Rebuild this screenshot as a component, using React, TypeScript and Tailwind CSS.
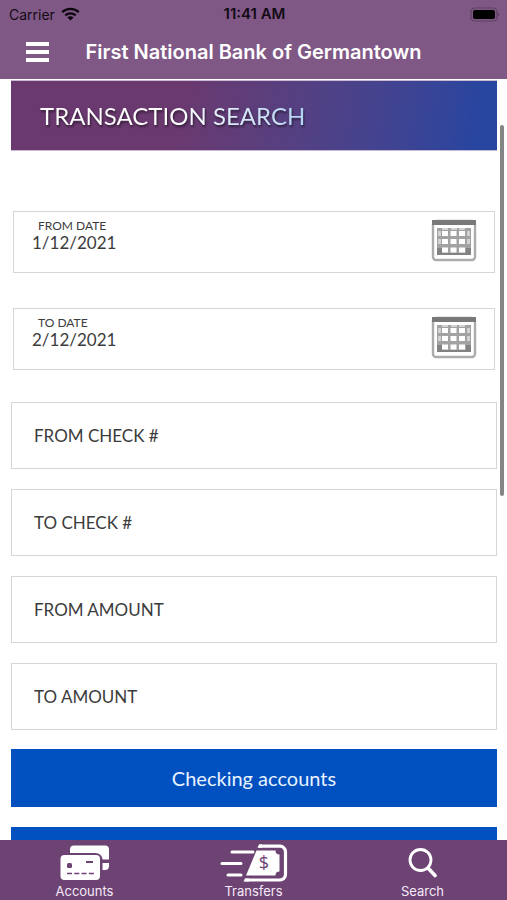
import React from "react";

type DateFieldProps = {
  id: string;
  label: string;
  value: string;
};

const WifiIcon = () => (
  <svg width="19" height="14" viewBox="0 0 19 14" fill="none" aria-hidden="true">
    <path d="M1.2 5.2C5.8.8 13.2.8 17.8 5.2" stroke="#0b070c" strokeWidth="2.4" />
    <path d="M4.300 8.300C7.200 5.600 11.800 5.600 14.700 8.300" stroke="#0b070c" strokeWidth="2.300" />
    <path d="M6.400 10.500C8.200 8.900 10.800 8.900 12.600 10.500L9.500 13.500Z" fill="#0b070c" />
  </svg>
);

const BatteryIcon = () => (
  <svg width="30" height="15" viewBox="0 0 30 15" aria-hidden="true">
    <rect x="1" y="1" width="26" height="13" rx="4" fill="none" stroke="#5d4062" strokeWidth="1.200" />
    <rect x="3" y="3" width="22" height="9" rx="2" fill="#000" />
    <path d="M28 5.500C29.500 6 29.500 9 28 9.500Z" fill="#5d4062" />
  </svg>
);

const CalendarIcon = () => (
  <svg width="46" height="44" viewBox="0 0 46 44" aria-hidden="true">
    <rect x="2" y="2" width="42" height="39" rx="3" fill="#fff" stroke="#ababab" strokeWidth="2.400" />
    <path d="M1 1h44v5H1z" fill="#787878" />
    <rect x="6" y="9" width="34" height="27" fill="#a2a2a2" />
    <path d="M6 29h5v7H6zM35 29h5v7h-5zM11 34h24v2H11z" fill="#828282" />
    <g fill="#d2d2d2">
      <path d="M7 12h3v5H7zM7 20h3v5H7zM36 12h3v5h-3zM36 20h3v5h-3z" />
      <path d="M11 9h6v2h-6zM20 9h6v2h-6zM28 9h6v2h-6z" />
    </g>
    <g fill="#fff">
      <rect x="11" y="12" width="6" height="5" />
      <rect x="19.500" y="12" width="6" height="5" />
      <rect x="28" y="12" width="6" height="5" />
      <rect x="11" y="20" width="6" height="5" />
      <rect x="19.500" y="20" width="6" height="5" />
      <rect x="28" y="20" width="6" height="5" />
      <rect x="11" y="28.500" width="6" height="5" />
      <rect x="19.500" y="28.500" width="6" height="5" />
      <rect x="28" y="28.500" width="6" height="5" />
    </g>
  </svg>
);

const CardsIcon = () => (
  <svg width="50" height="36" viewBox="0 0 50 36" aria-hidden="true">
    <path
      d="M10 8V4.500A4 4 0 0 1 14 .500H45A4 4 0 0 1 49 4.500V14.500H42.500A7 7 0 0 0 35.500 8Z"
      fill="#fff"
    />
    <path d="M42.500 18H49V21A4 4 0 0 1 45 25H42.500Z" fill="#fff" />
    <rect x=".500" y="10" width="39.500" height="25" rx="4" fill="#fff" />
    <rect x="7" y="18" width="5" height="5" rx="1.500" fill="#6c4373" />
    <path d="M26 17h7" stroke="#6c4373" strokeWidth="2" />
    <path d="M7 28.500h27" stroke="#6c4373" strokeWidth="1.500" strokeDasharray="5 2.300" />
  </svg>
);

const TransferIcon = () => (
  <svg width="68" height="38" viewBox="0 0 68 38" aria-hidden="true">
    <g stroke="#fff" strokeWidth="3" strokeLinecap="round">
      <path d="M12 8h21M2 19.500h19M8 31h13" />
    </g>
    <path
      d="M39 2.200H60A5.500 5.500 0 0 1 65.500 7.700V30.500A5.500 5.500 0 0 1 60 36H25"
      fill="none"
      stroke="#fff"
      strokeWidth="3.200"
    />
    <path d="M39 .600 37.400 3.800H42V.600ZM25 34.400 23.400 37.600H29V34.400Z" fill="#fff" />
    <path d="M36.500 6.500H55.500A4 4 0 0 0 59.500 10.500V27.500A4 4 0 0 0 55.500 31.500H26Z" fill="#fff" />
    <text
      x="44"
      y="25"
      textAnchor="middle"
      fontSize="18"
      fill="#6c4373"
      className="font-['Open_Sans',sans-serif]"
    >
      $
    </text>
  </svg>
);

const SearchIcon = () => (
  <svg width="30" height="30" viewBox="0 0 30 30" fill="none" stroke="#fff" aria-hidden="true">
    <circle cx="12.500" cy="12" r="10.500" strokeWidth="2.800" />
    <path d="M20 20 27 27.500" strokeWidth="3.600" strokeLinecap="round" />
  </svg>
);

const DateField = ({ id, label, value }: DateFieldProps) => (
  <div className="flex h-[62px] items-start justify-between border border-[#d6d6d6] pl-[18px] pr-[17px] pt-[7px]">
    <div className="flex min-w-0 flex-1 flex-col">
      <label htmlFor={id} className="pl-[6px] text-[12px] leading-[13px]">
        {label}
      </label>
      <input
        id={id}
        type="text"
        defaultValue={value}
        className="h-[22px] w-full bg-transparent text-[17px] leading-[22px] outline-none"
      />
    </div>
    <button type="button" aria-label={`Choose ${label.toLowerCase()}`}>
      <CalendarIcon />
    </button>
  </div>
);

const tabs = [
  { name: "Accounts", icon: <CardsIcon /> },
  { name: "Transfers", icon: <TransferIcon /> },
  { name: "Search", icon: <SearchIcon /> },
];

const App = () => {
  return (
    <div className="flex h-screen flex-col overflow-hidden bg-white font-['Lato',sans-serif] text-[#3c3c3c]">
      {/* Status bar and title */}
      <header className="shrink-0 bg-[#805886] font-['Inter',sans-serif]">
        <div className="grid h-7 grid-cols-3 items-center pl-[9px] pr-[7px] text-[14px] text-[#120b14]">
          <div className="flex items-center gap-[6px]">
            <span>Carrier</span>
            <WifiIcon />
          </div>
          <span className="text-center text-[15px] font-semibold">11:41 AM</span>
          <div className="flex justify-end">
            <BatteryIcon />
          </div>
        </div>
        <div className="grid h-[51px] grid-cols-[60px_1fr_60px] items-center pb-[3px]">
          <button type="button" aria-label="Menu" className="flex flex-col gap-1 pl-[26px]">
            <span className="h-1 w-[23px] bg-white" />
            <span className="h-1 w-[23px] bg-white" />
            <span className="h-1 w-[23px] bg-white" />
          </button>
          <h1 className="whitespace-nowrap text-center text-[20px] font-semibold text-white">
            First National Bank of Germantown
          </h1>
        </div>
      </header>

      {/* Search form */}
      <main className="relative min-h-0 flex-1 overflow-hidden pl-[11px] pr-[10px]">
        <div className="mt-px flex h-[71px] items-center border-y border-[#c9b8d2] bg-linear-100 from-[#6a396f] from-35% to-[#28459f] to-95% pl-[29px]">
          <h2 className="bg-linear-to-r from-white from-50% to-[#b4d4f4] bg-clip-text text-[24px] text-transparent drop-shadow-[1px_2px_1px_rgba(0,0,0,0.5)]">
            TRANSACTION SEARCH
          </h2>
        </div>

        <form>
          <div className="flex flex-col gap-[35px] px-[2px] pb-8 pt-[60px]">
            <DateField id="from-date" label="FROM DATE" value="1/12/2021" />
            <DateField id="to-date" label="TO DATE" value="2/12/2021" />
          </div>

          <div className="flex flex-col gap-5">
            {["FROM CHECK #", "TO CHECK #", "FROM AMOUNT", "TO AMOUNT"].map((name) => (
              <input
                key={name}
                type="text"
                aria-label={name}
                placeholder={name}
                className="h-[67px] w-full border border-[#d6d6d6] px-[22px] text-[17px] outline-none placeholder:text-[#3c3c3c]"
              />
            ))}
          </div>

          <div className="flex flex-col gap-5 pt-[19px]">
            <button type="button" className="h-[58px] w-full bg-[#0050c0] text-[20px] text-[#e8f3ff]">
              Checking accounts
            </button>
            <button type="button" aria-label="More accounts" className="h-[58px] w-full bg-[#0050c0]" />
          </div>
        </form>

        {/* Scroll thumb */}
        <div className="absolute right-[3px] top-[46px] h-[371px] w-1 rounded-full bg-[#858585]" />
      </main>

      {/* Tab bar */}
      <nav className="grid h-[60px] shrink-0 grid-cols-3 bg-[#6c4373] font-['Inter',sans-serif] text-[13px] leading-[14px] text-[#f6e9f8]">
        {tabs.map((tab) => (
          <a key={tab.name} href="#" className="flex flex-col items-center justify-between pb-[2px] pt-1">
            <span className="flex h-[38px] items-center">{tab.icon}</span>
            <span>{tab.name}</span>
          </a>
        ))}
      </nav>
    </div>
  );
};

export default App;
